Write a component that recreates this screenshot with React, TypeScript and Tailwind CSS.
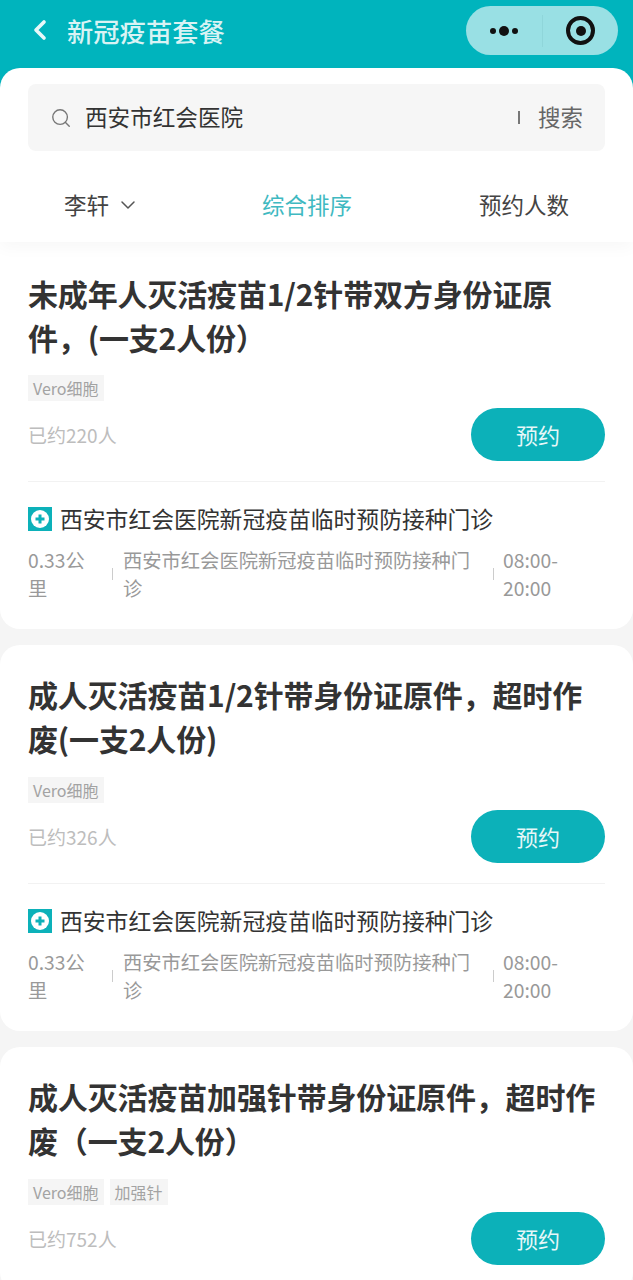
import React from "react";
import { ChevronDown, ChevronLeft, Search } from "lucide-react";

const font = { fontFamily: '"Noto Sans CJK SC", "Noto Sans", sans-serif' };

function Card({ title, tags, count, last, first }: { title: string[]; tags: string[]; count: string; last?: boolean; first?: boolean }) {
  return (
    <div className={first ? "bg-white rounded-b-[20px] px-[28px] pt-[30px] pb-[27px] mb-[16px]" : "bg-white rounded-[20px] px-[28px] pt-[27px] pb-[27px] mb-[16px]"}>
      <div className="text-[30px] leading-[44px] font-bold text-[#333333] tracking-[-0.15px]">
        {title.map((t) => (
          <div key={t} className="whitespace-nowrap">{t}</div>
        ))}
      </div>
      <div className={first ? "flex gap-[6px] mt-[16px]" : "flex gap-[6px] mt-[17px]"}>
        {tags.map((t) => (
          <span key={t} className="h-[26px] px-[5px] bg-[#f5f5f5] text-[#a3a3a3] text-[16px] leading-[26px]">{t}</span>
        ))}
      </div>
      <div className="flex items-center justify-between mt-[7px]">
        <span className="text-[19px] text-[#bdbdbd] pt-[1px]">{count}</span>
        <button className="w-[134px] h-[53px] rounded-full bg-[#0cb1b9] text-[#e6f7f8] text-[22px] leading-[53px] text-center">预约</button>
      </div>
      {!last && (
        <>
          <div className="h-px bg-[#f2f2f2] mt-[20px]" />
          <div className="flex items-center gap-[8px] mt-[24px] h-[26px]">
            <svg width="24" height="24" viewBox="0 0 24 24" className="shrink-0">
              <rect width="24" height="24" fill="#0cb1b9" />
              <circle cx="12" cy="12" r="9" fill="#ffffff" />
              <path d="M12 7.5v9M7.5 12h9" stroke="#0cb1b9" strokeWidth="3" />
            </svg>
            <span className="text-[22.8px] leading-[26px] text-[#333333] whitespace-nowrap -mt-[1px]">西安市红会医院新冠疫苗临时预防接种门诊</span>
          </div>
          <div className="flex items-center mt-[14px] text-[19.3px] leading-[28px] text-[#999999]">
            <div className="w-[70px] shrink-0">0.33公里</div>
            <div className="w-px h-[12px] bg-[#cccccc] ml-[14px] mr-[10px] shrink-0" />
            <div className="w-[360px] mr-[10px] shrink-0">西安市红会医院新冠疫苗临时预防接种门诊</div>
            <div className="w-px h-[12px] bg-[#cccccc] mr-[9px] shrink-0" />
            <div className="w-[62px] shrink-0">08:00-20:00</div>
          </div>
        </>
      )}
    </div>
  );
}

export default function App() {
  return (
    <div className="w-[633px] h-[1280px] overflow-hidden bg-[#f5f5f5]" style={font}>
      <div className="bg-[#00b4bd] relative z-10">
        <div className="h-[68px] flex items-center pl-[24px] pr-[15px] pb-[7px]">
          <ChevronLeft size={32} strokeWidth={2.75} className="text-[#e8f8f9] -mt-[2px]" />
          <span className="ml-[11px] text-[26.3px] font-medium text-[#d9f3f4]">新冠疫苗套餐</span>
          <div className="ml-auto w-[152px] h-[49px] rounded-full bg-[#99e0e4] flex items-center">
            <div className="w-[76px] flex items-center justify-center gap-[3px]">
              <span className="w-[6px] h-[6px] rounded-full bg-[#111111]" />
              <span className="w-[10px] h-[10px] rounded-full bg-[#111111]" />
              <span className="w-[6px] h-[6px] rounded-full bg-[#111111]" />
            </div>
            <div className="w-px h-[32px] bg-[#8fd6da]" />
            <div className="flex-1 flex items-center justify-center">
              <div className="w-[29px] h-[29px] rounded-full border-[4px] border-[#111111] flex items-center justify-center">
                <span className="w-[10px] h-[10px] rounded-full bg-[#111111]" />
              </div>
            </div>
          </div>
        </div>
        <div className="bg-white rounded-t-[20px] h-[174px] px-[28px] pt-[16px] shadow-[0_6px_16px_rgba(0,0,0,0.03)]">
          <div className="h-[67px] rounded-[8px] bg-[#f6f6f6] flex items-center pl-[22px] pr-[22px]">
            <Search size={22} strokeWidth={1.5} className="text-[#777777]" />
            <span className="ml-[13px] text-[22.6px] text-[#333333] -mt-[1px]">西安市红会医院</span>
            <span className="ml-auto w-[2px] h-[13px] bg-[#777777]" />
            <span className="ml-[18px] text-[22.5px] text-[#666666] -mt-[1px]">搜索</span>
          </div>
          <div className="flex items-center mt-[32px] h-[44px] text-[22.5px] text-[#444444]">
            <div className="w-[234px] pl-[36px] flex items-center gap-[7px]">
              <span>李轩</span>
              <ChevronDown size={24} strokeWidth={1.5} className="text-[#555555]" />
            </div>
            <span className="text-[#3fb9c1]">综合排序</span>
            <span className="ml-auto mr-[36px]">预约人数</span>
          </div>
        </div>
      </div>
      <div className="-mt-px">
        <Card first title={["未成年人灭活疫苗1/2针带双方身份证原", "件，(一支2人份）"]} tags={["Vero细胞"]} count="已约220人" />
        <Card title={["成人灭活疫苗1/2针带身份证原件，超时作", "废(一支2人份)"]} tags={["Vero细胞"]} count="已约326人" />
        <Card last title={["成人灭活疫苗加强针带身份证原件，超时作", "废（一支2人份）"]} tags={["Vero细胞", "加强针"]} count="已约752人" />
      </div>
    </div>
  );
}
